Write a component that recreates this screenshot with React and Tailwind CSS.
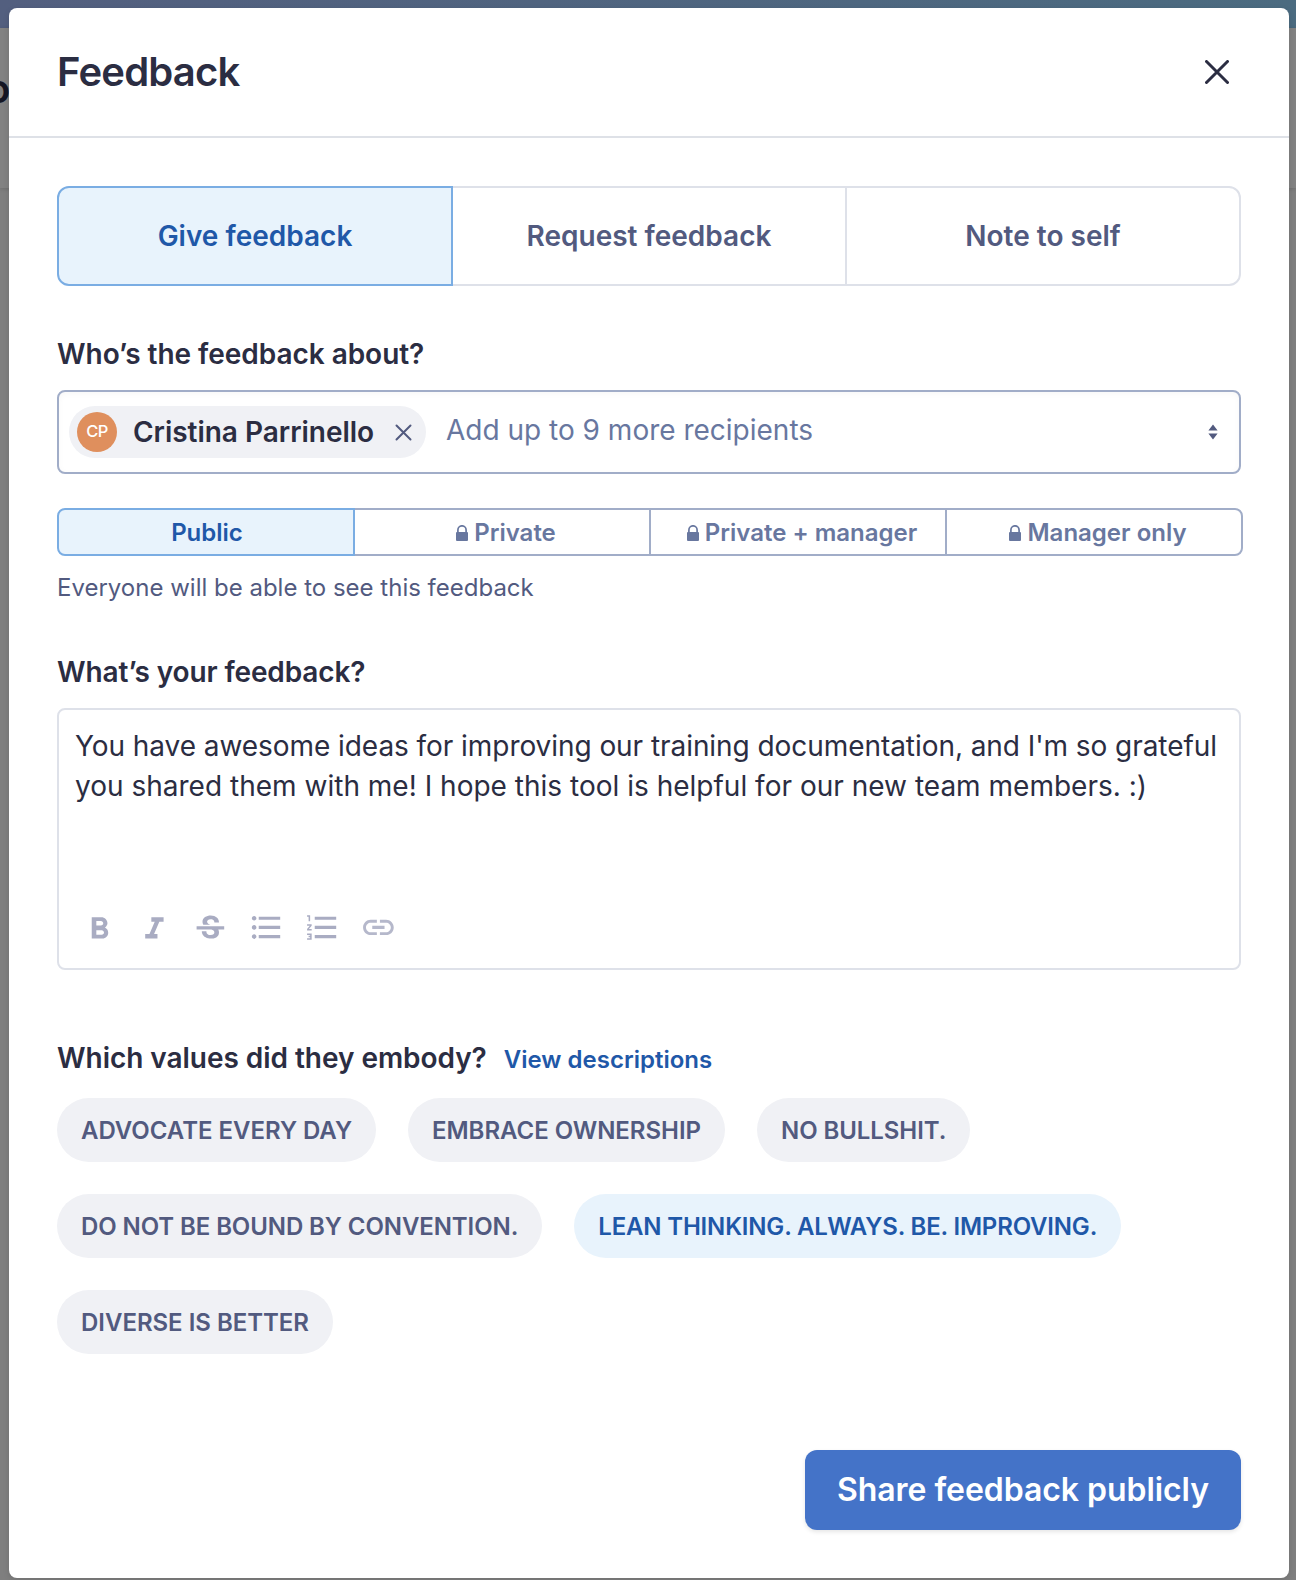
import {
  MdFormatBold,
  MdFormatItalic,
  MdStrikethroughS,
  MdFormatListBulleted,
  MdFormatListNumbered,
  MdLink,
} from 'react-icons/md';

const tabs = ['Give feedback', 'Request feedback', 'Note to self'];
const audiences = ['Public', 'Private', 'Private + manager', 'Manager only'];
const values = [
  { label: 'ADVOCATE EVERY DAY', tracking: 'tracking-[-0.03px]' },
  { label: 'EMBRACE OWNERSHIP', tracking: 'tracking-[-0.03px]' },
  { label: 'NO BULLSHIT.', tracking: 'tracking-[-0.08px]' },
  { label: 'DO NOT BE BOUND BY CONVENTION.', tracking: 'tracking-[-0.09px]' },
  { label: 'LEAN THINKING. ALWAYS. BE. IMPROVING.', tracking: 'tracking-[-0.17px]', selected: true },
  { label: 'DIVERSE IS BETTER', tracking: 'tracking-[-0.02px]' },
];
const tools = [
  { name: 'Bold', Icon: MdFormatBold, shift: 'mt-0.5' },
  { name: 'Italic', Icon: MdFormatItalic, shift: 'mt-0.5' },
  { name: 'Strikethrough', Icon: MdStrikethroughS, shift: 'mt-0.5' },
  { name: 'Bulleted list', Icon: MdFormatListBulleted, shift: 'mt-[0.4px]' },
  { name: 'Numbered list', Icon: MdFormatListNumbered, shift: 'mt-[0.4px]' },
  { name: 'Link', Icon: MdLink, shift: 'mt-[0.4px] opacity-85' },
];

function Cross({ size, width }) {
  const far = size - 1.5;
  return (
    <svg width={size} height={size} viewBox={`0 0 ${size} ${size}`} fill="none" stroke="currentColor" strokeWidth={width} strokeLinecap="round">
      <path d={`M1.5 1.5L${far} ${far}M${far} 1.5L1.5 ${far}`} />
    </svg>
  );
}

function Lock() {
  return (
    <svg width="12" height="16" viewBox="0 0 12 16" className="mt-px shrink-0" fill="none">
      <path d="M1.9 8V4.900a4.100 4.100 0 0 1 8.200 0V8" stroke="currentColor" strokeWidth="1.700" />
      <rect y="7" width="12" height="9" rx="1" fill="currentColor" />
    </svg>
  );
}

export default function App() {
  return (
    <div className="relative h-[1580px] w-[1296px] overflow-hidden bg-[#7f7f7f] font-['Inter',sans-serif]">
      <div className="h-7 bg-gradient-to-r from-[#535f7f] to-[#4b6b80]" />
      <div className="h-40 bg-[#828282] pt-10 shadow-[0_1px_4px_rgba(0,0,0,0.15)]">
        <div className="-ml-[14px] text-[40px] font-semibold leading-[41px] text-[#151624]">o</div>
      </div>
      <div className="absolute left-[9px] top-2 flex h-[1570px] w-[1280px] flex-col rounded-lg bg-white text-[28px] text-[#2b2d42] shadow-[0_2px_6px_rgba(0,0,0,0.12)]">
        <header className="flex h-[130px] shrink-0 items-center justify-between border-b-2 border-[#dee1e7] px-12">
          <h1 className="text-[40px] font-semibold leading-10 tracking-[-0.8px]">Feedback</h1>
          <button className="mr-3" aria-label="Close"><Cross size={24} width={3} /></button>
        </header>
        <main className="flex grow flex-col px-12 pt-12">
          <div className="flex h-[100px] text-[#525a7f]">
            {tabs.map((t, i) => (
              <button
                key={t}
                className={`w-[396px] border-2 font-semibold ${i === 0 ? 'relative rounded-l-xl border-[#7aade3] bg-[#e8f3fc] text-[#1f58a8]' : '-ml-0.5 border-[#dee1e9]'} ${i === 2 ? 'rounded-r-xl' : ''}`}
              >
                {t}
              </button>
            ))}
          </div>
          <h2 className="mt-12 font-semibold leading-10 tracking-[-0.04px]">Who’s the feedback about?</h2>
          <div className="mt-4 flex h-[84px] shrink-0 items-center rounded-lg border-2 border-[#a1adc8] pl-2.5 pr-[21px] shadow-[inset_0_2px_6px_rgba(0,0,0,0.03)]">
            <div className="flex h-[52px] w-[357px] items-center rounded-full bg-[#f0f1f5] pl-2">
              <span className="flex size-10 items-center justify-center rounded-full bg-[#df8f5d] pb-0.5 text-[16.500px] font-medium tracking-[-0.5px] text-white">CP</span>
              <span className="ml-4 font-semibold tracking-[-0.03px]">Cristina Parrinello</span>
              <button className="ml-auto mr-[14px] text-[#525a7f]" aria-label="Remove"><Cross size={17} width={2} /></button>
            </div>
            <span className="-mt-1 ml-5 text-[#68779f]">Add up to 9 more recipients</span>
            <svg className="ml-auto text-[#525a7f]" width="10" height="16" viewBox="0 0 10 16" fill="currentColor">
              <path d="M5 .5L9.600 6.500H.4zM5 15.500L.4 9.500h9.200z" />
            </svg>
          </div>
          <div className="mt-[34px] flex h-12 w-[1186px] shrink-0 text-[24px] text-[#68779f]">
            {audiences.map((a, i) => (
              <button
                key={a}
                className={`flex w-[298px] items-center justify-center gap-1.5 border-2 pt-px font-semibold ${i === 0 ? 'relative rounded-l-lg border-[#7aade3] bg-[#e8f3fc] pl-0.5 text-[#1f58a8]' : '-ml-0.5 border-[#a1adc8] pl-2'} ${i === 3 ? 'rounded-r-lg' : ''}`}
              >
                {i > 0 && <Lock />}
                {a}
              </button>
            ))}
          </div>
          <p className="mt-4 text-[24px] leading-8 text-[#525a7f]">Everyone will be able to see this feedback</p>
          <h2 className="mt-12 font-semibold leading-10 tracking-[-0.12px]">What’s your feedback?</h2>
          <div className="mt-4 flex h-[262px] shrink-0 flex-col justify-between rounded-lg border-2 border-[#dee1e9] px-4 pb-[19px] pt-4">
            <p className="whitespace-nowrap leading-10">
              <span className="tracking-[-0.06px]">You have awesome ideas for improving our training documentation, and I'm so grateful</span>
              <br />
              <span className="tracking-[0.01px]">you shared them with me! I hope this tool is helpful for our new team members. :)</span>
            </p>
            <div className="flex h-10 items-start gap-[19.2px] pl-[5.5px] text-[#a9acc2]">
              {tools.map(({ name, Icon, shift }) => (
                <button key={name} aria-label={name} className={shift}>
                  <Icon className="block size-[36.800px]" />
                </button>
              ))}
            </div>
          </div>
          <div className="mt-[68px] flex h-10 items-baseline leading-10">
            <h2 className="font-semibold tracking-[-0.04px]">Which values did they embody?</h2>
            <a className="ml-[17px] text-[24px] font-semibold text-[#1f58a8]">View descriptions</a>
          </div>
          <div className="mt-5 flex flex-wrap gap-8 text-[24px] text-[#525a7f]">
            {values.map(({ label, tracking, selected }) => (
              <button key={label} className={`h-16 rounded-full px-6 pt-0.5 font-semibold ${tracking} ${selected ? 'bg-[#e8f3fc] text-[#1f58a8]' : 'bg-[#f0f1f5]'}`}>
                {label}
              </button>
            ))}
          </div>
          <button className="mb-12 ml-auto mt-auto h-20 rounded-xl bg-[#4473c8] px-8 text-[32px] font-semibold tracking-[-0.05px] text-white shadow-[0_2px_4px_rgba(0,0,0,0.1)]">
            Share feedback publicly
          </button>
        </main>
      </div>
    </div>
  );
}
